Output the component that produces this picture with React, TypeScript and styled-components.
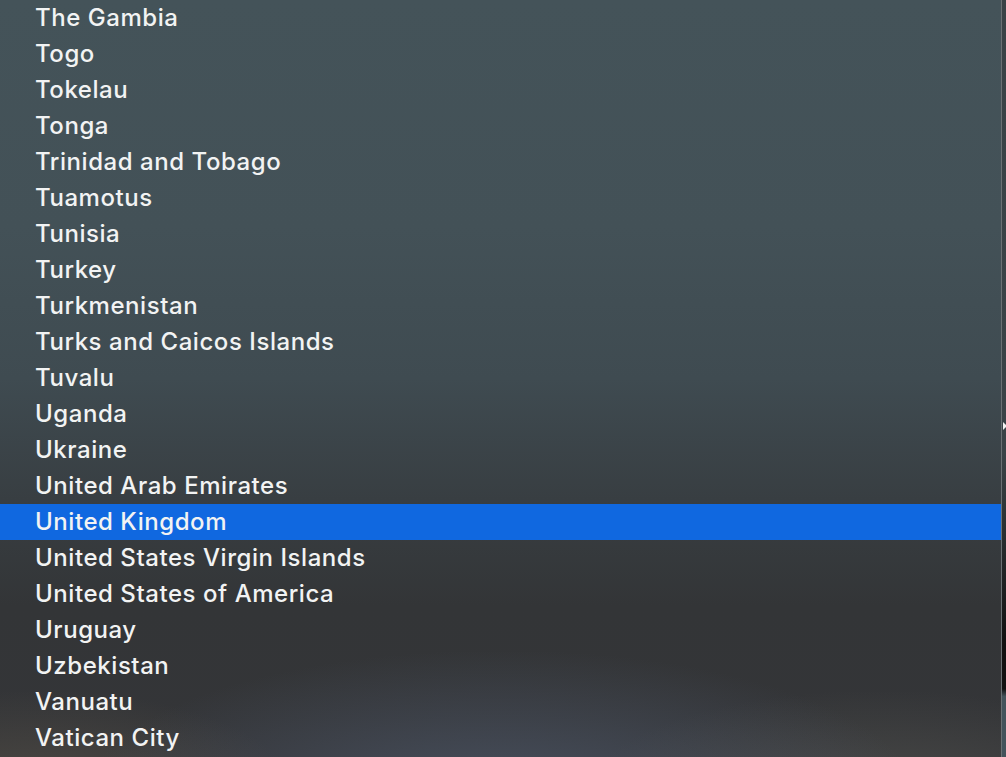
import styled, { createGlobalStyle } from "styled-components";

const GlobalStyle = createGlobalStyle`
  html, body {
    margin: 0;
    padding: 0;
    width: 1006px;
    height: 757px;
    overflow: hidden;
    background: #2b3034;
  }
`;

const Screen = styled.div`
  display: flex;
  width: 1006px;
  height: 757px;
  overflow: hidden;
`;

const Menu = styled.div`
  flex: 0 0 1001px;
  height: 757px;
  overflow: hidden;
  background:
    radial-gradient(ellipse 420px 150px at 500px 800px, rgba(88, 102, 126, 0.55), rgba(88, 102, 126, 0) 100%),
    radial-gradient(ellipse 300px 110px at 880px 800px, rgba(90, 90, 84, 0.55), rgba(90, 90, 84, 0) 100%),
    radial-gradient(ellipse 260px 110px at 40px 800px, rgba(98, 90, 76, 0.55), rgba(98, 90, 76, 0) 100%),
    linear-gradient(180deg, #445359 0%, #435157 30%, #3f4b51 50%, #383e42 66%, #333537 80%, #343538 100%);
  border-right: 1px solid #6a7174;
`;

const List = styled.ul`
  list-style: none;
  margin: 0;
  padding: 0;
`;

const Row = styled.li<{ $selected?: boolean }>`
  height: 36px;
  box-sizing: border-box;
  display: flex;
  align-items: center;
  padding: 0 0 2px 35px;
  font-family: Inter, "Noto Sans", sans-serif;
  font-size: 24px;
  font-weight: 500;
  letter-spacing: 0.55px;
  color: #f2f3f3;
  background: ${(p) => (p.$selected ? "#1068e0" : "transparent")};
  white-space: nowrap;
`;

const Edge = styled.div`
  flex: 1;
  height: 757px;
  position: relative;
  background: linear-gradient(180deg, #394246 0%, #3a4347 60%, #111 85%, #111 91%, #43535b 92%, #43535b 100%);
`;

const Arrow = styled.div`
  position: absolute;
  top: 422px;
  left: 1px;
  width: 0;
  height: 0;
  border-top: 4px solid transparent;
  border-bottom: 4px solid transparent;
  border-left: 4px solid #f2f2f2;
`;

const countries = [
  "The Gambia",
  "Togo",
  "Tokelau",
  "Tonga",
  "Trinidad and Tobago",
  "Tuamotus",
  "Tunisia",
  "Turkey",
  "Turkmenistan",
  "Turks and Caicos Islands",
  "Tuvalu",
  "Uganda",
  "Ukraine",
  "United Arab Emirates",
  "United Kingdom",
  "United States Virgin Islands",
  "United States of America",
  "Uruguay",
  "Uzbekistan",
  "Vanuatu",
  "Vatican City",
];

const App = () => {
  return (
    <>
      <GlobalStyle />
      <Screen>
        <Menu>
          <List>
            {countries.map((name) => (
              <Row key={name} $selected={name === "United Kingdom"}>
                {name}
              </Row>
            ))}
          </List>
        </Menu>
        <Edge>
          <Arrow />
        </Edge>
      </Screen>
    </>
  );
};

export default App;
